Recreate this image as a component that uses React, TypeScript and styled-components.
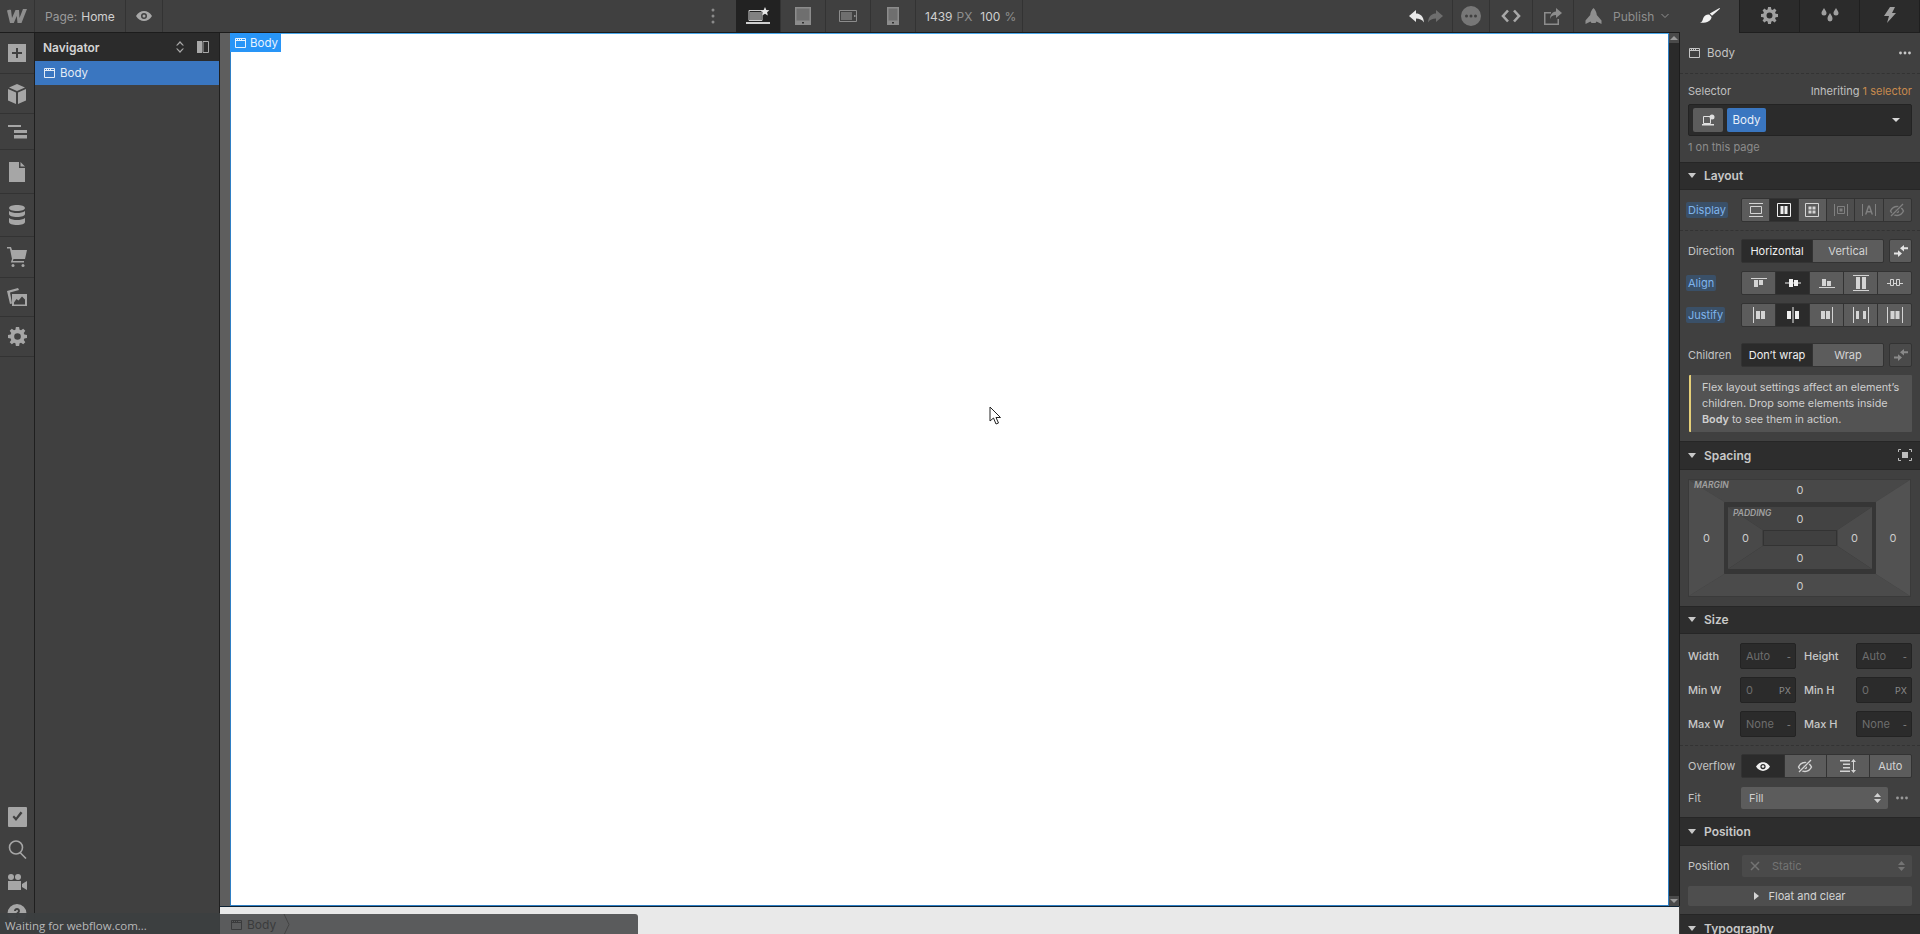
import React from "react";
import styled, { createGlobalStyle } from "styled-components";

const Global = createGlobalStyle`
  html, body { margin: 0; padding: 0; height: 100%; background: #404040; }
  #root { height: 100%; }
  * { box-sizing: border-box; }
`;

const Page = styled.div`
  position: relative;
  display: flex;
  width: 1920px;
  height: 934px;
  overflow: hidden;
  font-family: Inter, "Liberation Sans", sans-serif;
  font-size: 11px;
  color: #d9d9d9;
  background: #404040;
`;
const Workspace = styled.div`
  display: flex;
  flex-direction: column;
  width: 1680px;
  height: 934px;
`;
const TopBar = styled.header`
  display: flex;
  align-items: stretch;
  height: 33px;
  background: #404040;
  border-bottom: 1px solid #1c1c1c;
  flex: none;
`;
const TopCell = styled.div<{ $w: number; $active?: boolean; $noBorder?: boolean; $color?: string }>`
  display: flex;
  align-items: center;
  justify-content: center;
  flex: none;
  width: ${(p) => p.$w}px;
  background: ${(p) => (p.$active ? "#222222" : "transparent")};
  border-right: ${(p) => (p.$noBorder ? "none" : "1px solid #333333")};
  color: ${(p) => p.$color ?? "#a8a8a8"};
`;
const PageLabel = styled.div`
  display: flex;
  align-items: center;
  gap: 4px;
  flex: none;
  width: 91px;
  padding-left: 10px;
  font-size: 12px;
  color: #9a9a9a;
  border-right: 1px solid #333333;
  b { font-weight: 400; color: #d0d0d0; }
`;
const Spring = styled.div<{ $w?: number }>`
  flex: ${(p) => (p.$w ? "none" : "1")};
  width: ${(p) => (p.$w ? `${p.$w}px` : "auto")};
`;
const Readout = styled.div`
  display: flex;
  align-items: center;
  flex: none;
  width: 107px;
  padding-left: 9px;
  font-size: 12px;
  color: #cfcfcf;
  border-right: 1px solid #333333;
  gap: 4px;
  span { color: #8f8f8f; }
  i { font-style: normal; margin-left: 4px; }
`;
const UndoPair = styled.div`
  display: flex;
  gap: 4px;
`;
const PublishCell = styled.div`
  display: flex;
  align-items: center;
  flex: none;
  width: 106px;
  padding-left: 11px;
  font-size: 12px;
  color: #8f8f8f;
  gap: 11px;
  svg:last-child { margin-left: -4px; }
`;
const Body = styled.div`
  display: flex;
  flex: 1;
  min-height: 0;
`;
const Rail = styled.nav`
  display: flex;
  flex-direction: column;
  width: 35px;
  flex: none;
  background: #404040;
  border-right: 1px solid #1f1f1f;
`;
const RailItem = styled.div<{ $h: number; $plain?: boolean; $top?: number }>`
  display: flex;
  align-items: ${(p) => (p.$top ? "flex-start" : "center")};
  justify-content: center;
  height: ${(p) => p.$h}px;
  padding-top: ${(p) => p.$top ?? 0}px;
  flex: none;
  color: #a6a6a6;
  border-bottom: ${(p) => (p.$plain ? "none" : "1px solid #333333")};
`;
const Navigator = styled.aside`
  width: 185px;
  flex: none;
  background: #404040;
  border-right: 1px solid #1f1f1f;
`;
const NavHead = styled.div`
  display: flex;
  align-items: center;
  height: 28px;
  padding: 0 10px 0 8px;
  background: #2b2b2b;
  font-size: 12px;
  font-weight: 600;
  color: #d4d4d4;
`;
const NavTool = styled.span<{ $mr?: number }>`
  display: flex;
  color: #a8a8a8;
  margin-right: ${(p) => p.$mr ?? 0}px;
`;
const NavRow = styled.div`
  display: flex;
  align-items: center;
  gap: 5px;
  height: 24px;
  padding-left: 9px;
  background: #3a76c0;
  font-size: 11.5px;
  color: #e4ecf6;
`;
const CanvasCol = styled.main`
  display: flex;
  flex-direction: column;
  flex: 1;
  min-width: 0;
`;
const CanvasRow = styled.div`
  display: flex;
  height: 873px;
  flex: none;
`;
const Gutter = styled.div`
  width: 10px;
  flex: none;
  background: #5e5e5e;
`;
const Canvas = styled.div`
  position: relative;
  width: 1439px;
  flex: none;
  background: #ffffff;
  border: 1px solid #2f7fc4;
  border-top-color: #4aa8ea;
`;
const BodyTag = styled.div`
  position: absolute;
  left: -1px;
  top: -1px;
  display: flex;
  align-items: center;
  gap: 4px;
  width: 51px;
  height: 19px;
  padding-left: 5px;
  background: #2895f7;
  font-size: 11.5px;
  color: #e8f3fe;
`;
const Cursor = styled.svg`
  position: absolute;
  left: 758px;
  top: 372px;
`;
const Scrollbar = styled.div`
  display: flex;
  flex-direction: column;
  justify-content: space-between;
  width: 11px;
  flex: none;
  background: #2a2a2a;
  border-right: 1px solid #1c1c1c;
`;
const ScrollBtn = styled.div<{ $down?: boolean }>`
  display: flex;
  align-items: center;
  justify-content: center;
  height: 10px;
  background: #4a4a4a;
  &::before {
    content: "";
    border-left: 4px solid transparent;
    border-right: 4px solid transparent;
    ${(p) => (p.$down ? "border-top: 4px solid #9a9a9a;" : "border-bottom: 4px solid #9a9a9a;")}
  }
`;
const Footer = styled.div`
  flex: 1;
  padding-top: 7px;
  background: #e9e9e9;
  border-top: 1px solid #0e2233;
  margin-right: 1px;
`;
const Crumbs = styled.div`
  display: flex;
  align-items: center;
  gap: 5px;
  width: 418px;
  height: 21px;
  padding-left: 11px;
  background: #5a5b5c;
  border-radius: 0 3px 0 0;
  font-size: 12px;
  color: #3a3b3c;
`;
const CrumbChevron = styled.svg`
  display: block;
  flex: none;
  margin-left: 2px;
`;
const Status = styled.div`
  position: absolute;
  left: 0;
  bottom: 0;
  display: flex;
  align-items: center;
  width: 220px;
  height: 21px;
  padding: 3px 0 0 5px;
  background: #3c3f41;
  font-family: "Open Sans", sans-serif;
  font-size: 11.5px;
  color: #bdbdbd;
  opacity: 0.97;
`;

/* Right panel */
const Panel = styled.aside`
  width: 240px;
  height: 934px;
  flex: none;
  overflow: hidden;
  background: #404040;
`;
const Tabs = styled.div`
  display: flex;
  height: 33px;
`;
const Tab = styled.div<{ $w: number; $active?: boolean }>`
  display: flex;
  align-items: center;
  justify-content: center;
  width: ${(p) => p.$w}px;
  flex: none;
  padding-bottom: 2px;
  color: ${(p) => (p.$active ? "#f2f2f2" : "#a0a0a0")};
  background: ${(p) => (p.$active ? "#404040" : "#2b2b2b")};
  border-right: 1px solid #1f1f1f;
  border-bottom: ${(p) => (p.$active ? "none" : "1px solid #1f1f1f")};
`;
const ElementRow = styled.div`
  display: flex;
  align-items: center;
  gap: 7px;
  height: 41px;
  padding: 0 9px;
  font-size: 11.5px;
  color: #c4c4c4;
  border-bottom: 1px dashed #333333;
`;
const Push = styled.div`
  flex: 1;
`;
const RowDots = styled.span<{ $color: string; $ml?: number }>`
  display: flex;
  color: ${(p) => p.$color};
  margin-left: ${(p) => p.$ml ?? 0}px;
`;
const SelectorBlock = styled.div`
  height: 88px;
  padding: 10px 8px 0;
`;
const SelectorLabels = styled.div`
  display: flex;
  justify-content: space-between;
  height: 14px;
  line-height: 14px;
  margin-bottom: 6px;
  font-size: 11px;
  color: #c0c0c0;
  em { font-style: normal; color: #c78a4e; }
`;
const SelectorBox = styled.div`
  display: flex;
  align-items: center;
  gap: 4px;
  height: 32px;
  padding: 0 11px 0 4px;
  background: #2b2b2b;
  border: 1px solid #232323;
  border-radius: 2px;
`;
const ChipIcon = styled.div`
  display: flex;
  align-items: center;
  justify-content: center;
  width: 30px;
  height: 24px;
  background: #5c5c5c;
  border-radius: 2px;
  color: #e0e0e0;
`;
const ChipBlue = styled.div`
  display: flex;
  align-items: center;
  justify-content: center;
  width: 39px;
  height: 24px;
  background: #3a76c0;
  border-radius: 2px;
  font-size: 11.5px;
  color: #e8f0fa;
`;
const Caret = styled.div<{ $color?: string }>`
  flex: none;
  border-left: 4px solid transparent;
  border-right: 4px solid transparent;
  border-top: 4px solid ${(p) => p.$color ?? "#d0d0d0"};
`;
const OnPage = styled.div`
  margin-top: 4px;
  height: 14px;
  line-height: 14px;
  font-size: 11px;
  color: #8c8c8c;
`;
const SectionHead = styled.div<{ $h?: number }>`
  display: flex;
  align-items: center;
  gap: 8px;
  height: ${(p) => p.$h ?? 28}px;
  padding: 0 8px 1px;
  background: #2d2d2d;
  border-top: 1px solid #262626;
  border-bottom: 1px solid #262626;
  font-size: 12px;
  font-weight: 600;
  color: #c8c8c8;
`;
const SectionBody = styled.div<{ $pb?: number; $pt?: number }>`
  padding: ${(p) => p.$pt ?? 9}px 8px ${(p) => p.$pb ?? 9}px;
`;
const Row = styled.div<{ $mb?: number; $h?: number }>`
  display: flex;
  align-items: center;
  height: ${(p) => p.$h ?? 24}px;
  margin-bottom: ${(p) => p.$mb ?? 8}px;
`;
const Label = styled.div<{ $w?: number }>`
  width: ${(p) => p.$w ?? 53}px;
  flex: none;
  font-size: 11px;
  color: #c4c4c4;
`;
const StyledLabel = styled.div`
  flex: none;
  margin-left: -2px;
  margin-right: auto;
  padding: 1px 2px;
  border-radius: 2px;
  background: #3a5068;
  font-size: 11px;
  line-height: 14px;
  color: #7fb4ec;
`;
const Dashed = styled.div`
  margin: 0 -8px 8px;
  border-top: 1px dashed #333333;
`;
const Segments = styled.div<{ $w?: number }>`
  display: flex;
  flex: none;
  width: ${(p) => p.$w ?? 171}px;
  height: 100%;
  border: 1px solid #333333;
  border-radius: 2px;
  overflow: hidden;
  background: #333333;
  gap: 1px;
`;
const Seg = styled.div<{ $on?: boolean; $dim?: boolean }>`
  display: flex;
  flex: 1 1 0;
  align-items: center;
  justify-content: center;
  min-width: 0;
  background: ${(p) => (p.$on ? "#2b2b2b" : p.$dim ? "#4d4d4d" : "#5c5c5c")};
  color: ${(p) => (p.$on ? "#f0f0f0" : p.$dim ? "#808080" : "#d4d4d4")};
  font-size: 11px;
`;
const SmallBtn = styled.div<{ $dim?: boolean }>`
  display: flex;
  align-items: center;
  justify-content: center;
  flex: none;
  width: 23px;
  height: 100%;
  margin-left: 5px;
  border: 1px solid #333333;
  border-radius: 2px;
  background: ${(p) => (p.$dim ? "#4a4a4a" : "#5c5c5c")};
  color: ${(p) => (p.$dim ? "#8a8a8a" : "#e4e4e4")};
`;
const Notice = styled.div`
  height: 57px;
  padding: 5px 3px 0 11px;
  margin-left: 1px;
  background: #535353;
  border-left: 2px solid #e5cf78;
  border-radius: 1px;
  font-size: 10.8px;
  line-height: 16px;
  color: #cfcfcf;
  b { font-weight: 600; }
`;
const SpacingOuter = styled.div`
  position: relative;
  display: grid;
  grid-template-columns: 35px 1fr 34px;
  grid-template-rows: 22px 72px 22px;
  width: 223px;
  height: 118px;
  border: 1px solid #3a3a3a;
  text-align: center;
`;
const SpacingInner = styled.div`
  position: relative;
  display: grid;
  grid-template-columns: 35px 1fr 35px;
  grid-template-rows: 23px 16px 23px;
  height: 62px;
  text-align: center;
`;
const SpacingFrame = styled.div`
  position: relative;
  grid-column: 2;
  grid-row: 2;
  padding: 5px 4px;
  background: #363636;
  border-radius: 1px;
`;
const Bevel = styled.svg`
  position: absolute;
  inset: 0;
  width: 100%;
  height: 100%;
`;
const Val = styled.div<{ $c: number; $r: number; $nudge?: number }>`
  position: relative;
  grid-column: ${(p) => p.$c};
  grid-row: ${(p) => p.$r};
  display: flex;
  align-items: center;
  justify-content: center;
  padding: ${(p) => (p.$nudge && p.$nudge > 0 ? p.$nudge : 0)}px 0 ${(p) => (p.$nudge && p.$nudge < 0 ? -p.$nudge : 0)}px;
  font-size: 11px;
  color: #cccccc;
`;
const Tag = styled.div<{ $top: number }>`
  position: absolute;
  left: 5px;
  top: ${(p) => p.$top}px;
  font-size: 8.5px;
  line-height: 12px;
  font-weight: 600;
  font-style: italic;
  color: #a0a0a0;
`;
const Core = styled.div`
  position: relative;
  grid-column: 2;
  grid-row: 2;
  background: #404040;
  border: 1px solid #333333;
  border-radius: 1px;
`;
const Field = styled.div`
  display: flex;
  align-items: center;
  justify-content: space-between;
  flex: none;
  width: 56px;
  height: 26px;
  padding: 0 4px 0 5px;
  background: #2b2b2b;
  border: 1px solid #232323;
  border-radius: 2px;
  font-size: 11px;
  color: #6e6e6e;
  span { color: #8a8a8a; font-size: 9px; }
`;
const SizeLabel = styled(Label)<{ $gap?: boolean }>`
  font-weight: 500;
  color: #c8c8c8;
  margin-left: ${(p) => (p.$gap ? 8 : 0)}px;
`;
const SelectBox = styled.div<{ $w: number; $dim?: boolean }>`
  display: flex;
  align-items: center;
  justify-content: space-between;
  flex: none;
  width: ${(p) => p.$w}px;
  height: 100%;
  padding: 0 7px 0 8px;
  background: ${(p) => (p.$dim ? "#4a4a4a" : "#5c5c5c")};
  border-radius: 2px;
  font-size: 11px;
  color: ${(p) => (p.$dim ? "#747474" : "#d0d0d0")};
`;
const StaticValue = styled.span`
  display: flex;
  align-items: center;
  gap: 12px;
`;
const FloatBtn = styled.div`
  display: flex;
  align-items: center;
  justify-content: center;
  gap: 9px;
  height: 20px;
  margin-bottom: 8px;
  background: #4e4e4e;
  border-radius: 2px;
  font-size: 11px;
  color: #d4d4d4;
`;
const Glyph = styled.svg`
  display: block;
  flex: none;
`;

const Ico: React.FC<{ w?: number; h?: number; children: React.ReactNode }> = ({ w = 16, h = 16, children }) => (
  <Glyph width={w} height={h} viewBox={`0 0 ${w} ${h}`} fill="currentColor">
    {children}
  </Glyph>
);

const WindowIcon = () => (
  <Ico w={11} h={10}>
    <path d="M.5.5h10v9H.5zM.5 2.5h10" fill="none" stroke="currentColor" />
    <path d="M2 1h1v1H2zM4 1h1v1H4zM6 1h1v1H6z" />
  </Ico>
);
const Tri = () => (
  <Ico w={8} h={5}>
    <path d="M0 0h8L4 5z" />
  </Ico>
);
const SelectArrows = () => (
  <Ico w={7} h={10}>
    <path d="M3.5 0L7 4H0zM0 6h7l-3.5 4z" />
  </Ico>
);
const Dots = ({ w = 12 }: { w?: number }) => (
  <Ico w={w} h={4}>
    <circle cx="1.5" cy="2" r="1.4" />
    <circle cx="6" cy="2" r="1.4" />
    <circle cx="10.5" cy="2" r="1.4" />
  </Ico>
);
const Eye = ({ w = 16, h = 12 }: { w?: number; h?: number }) => (
  <Glyph width={w} height={h} viewBox="0 0 16 12" fill="currentColor">
    <path fillRule="evenodd" d="M0 6c2-3.5 5-5 8-5s6 1.5 8 5c-2 3.5-5 5-8 5s-6-1.5-8-5zm8-3a3 3 0 100 6 3 3 0 000-6z" />
    <circle cx="8" cy="6" r="1.5" />
  </Glyph>
);
const EyeSlash = ({ bg }: { bg: string }) => (
  <Ico w={16} h={14}>
    <path d="M1.5 8C3 5 5.500 3.500 8 3.500S13 5 14.500 8C13 11 10.500 12.500 8 12.500S3 11 1.500 8z" fill="none" stroke="currentColor" strokeWidth="1.4" />
    <circle cx="8" cy="8" r="2.2" />
    <path d="M1 14L15 0" stroke={bg} strokeWidth="3.2" />
    <path d="M2 13L14 1" stroke="currentColor" strokeWidth="1.3" />
  </Ico>
);
const Gear = ({ s = 19 }: { s?: number }) => (
  <Glyph width={s} height={s} viewBox="0 0 20 20" fill="currentColor">
    <path
      fillRule="evenodd"
      d="M8.300 0h3.400l.5 2.800 1.500.6L16 1.800 18.200 4l-1.600 2.300.6 1.500 2.800.5v3.400l-2.800.5-.6 1.500 1.600 2.300L16 18.200l-2.300-1.600-1.500.6-.5 2.800H8.300l-.5-2.800-1.500-.6L4 18.200 1.800 16l1.600-2.300-.6-1.500L0 11.700V8.300l2.800-.5.6-1.500L1.800 4 4 1.800l2.300 1.600 1.500-.6zM10 6.500a3.500 3.500 0 100 7 3.500 3.500 0 000-7z"
    />
  </Glyph>
);
const Bolt = () => (
  <Ico w={12} h={16}>
    <path d="M6 0h5L8 6h4L3 16l2-7H0z" />
  </Ico>
);
const Drops = () => (
  <Ico w={18} h={14}>
    <path d="M3 0c1.500 2.500 2.500 3.500 2.500 5A2.500 2.500 0 01.500 5C.500 3.500 1.500 2.500 3 0zM15 0c1.500 2.500 2.500 3.500 2.500 5a2.500 2.500 0 01-5 0C12.500 3.500 13.500 2.500 15 0zM9 5c1.500 2.500 2.500 3.500 2.500 6a2.500 2.500 0 01-5 0C6.500 8.500 7.500 7.500 9 5z" />
  </Ico>
);
const Brush = () => (
  <Ico w={20} h={16}>
    <path d="M19.500 0l.5.800-8 7-2.200-2.200zM9.200 6.600l2.400 2.400C11 13 7 15.200 0 14.800c2.500-1 2.400-2.200 3.200-4.500C4 8 6.500 6.300 9.200 6.600z" />
  </Ico>
);
const Swap = () => (
  <Ico w={14} h={12}>
    <path d="M14 2.300H10V0L6 3.300l4 3.300V4.300h4zM0 7.500h4V5.300l4 3.300L4 12V9.500H0z" />
  </Ico>
);

const StrokeIco: React.FC<{ w: number; h: number; d: string; sw?: number }> = ({ w, h, d, sw = 1 }) => (
  <Glyph width={w} height={h} viewBox={`0 0 ${w} ${h}`} fill="none" stroke="currentColor" strokeWidth={sw}>
    <path d={d} />
  </Glyph>
);

const displayIcons: React.ReactNode[] = [
  <Ico w={14} h={14} key="0"><path d="M0 .5h14M0 13.500h14" fill="none" stroke="currentColor" /><path d="M1.500 3.500h11v7h-11z" fill="none" stroke="currentColor" /></Ico>,
  <Ico w={14} h={14} key="1"><path d="M.5.5h13v13H.5z" fill="none" stroke="currentColor" /><path d="M3.500 3h3v8h-3zM7.500 3h3v8h-3z" /></Ico>,
  <Ico w={14} h={14} key="2"><path d="M.5.5h13v13H.5z" fill="none" stroke="currentColor" /><path d="M3.500 3.500h3v3h-3zM7.500 3.500h3v3h-3zM3.500 7.500h3v3h-3zM7.500 7.500h3v3h-3z" /></Ico>,
  <Ico w={14} h={12} key="3"><path d="M.5 0v12M13.500 0v12M3.500 2.500h7v7h-7z" fill="none" stroke="currentColor" /><path d="M5.500 4.500h3v3h-3z" /></Ico>,
  <Ico w={14} h={12} key="4"><path d="M.5 0v12M13.500 0v12" fill="none" stroke="currentColor" /><path d="M6 1.500h2l3 9H9.500l-.7-2H5.200l-.7 2H3zM5.700 7h2.600L7 3.200z" /></Ico>,
  <EyeSlash bg="#4d4d4d" key="5" />,
];
const alignIcons: React.ReactNode[] = [
  <Ico w={16} h={10} key="0"><path d="M0 .5h16" fill="none" stroke="currentColor" /><path d="M3 2h4v7H3zM8 2h4v5H8z" /></Ico>,
  <Ico w={16} h={10} key="1"><path d="M0 5h16" fill="none" stroke="currentColor" /><path d="M4 1h4v8H4zM9 2h4v6H9z" /></Ico>,
  <Ico w={16} h={10} key="2"><path d="M0 9.500h16" fill="none" stroke="currentColor" /><path d="M3 1h4v7H3zM8 3h4v5H8z" /></Ico>,
  <Ico w={16} h={16} key="3"><path d="M0 .5h16M0 15.500h16" fill="none" stroke="currentColor" /><path d="M3 2h4v12H3zM9 2h4v12H9z" /></Ico>,
  <Ico w={16} h={8} key="4"><path d="M0 4.500h3M6.500 4.500h3M13 4.500h3M3.500 .5h3v6h-3zM9.500 .5h3v6h-3z" fill="none" stroke="currentColor" /></Ico>,
];
const justifyIcons: React.ReactNode[] = [
  <Ico w={12} h={16} key="0"><path d="M.5 0v16" fill="none" stroke="currentColor" /><path d="M3 4h4v8H3zM8 4h4v8H8z" /></Ico>,
  <Ico w={12} h={16} key="1"><path d="M6 0v16" fill="none" stroke="currentColor" /><path d="M0 4h4v8H0zM8 4h4v8H8z" /></Ico>,
  <Ico w={12} h={16} key="2"><path d="M11.500 0v16" fill="none" stroke="currentColor" /><path d="M0 4h4v8H0zM5 4h4v8H5z" /></Ico>,
  <Ico w={16} h={16} key="3"><path d="M.5 0v16M15.500 0v16" fill="none" stroke="currentColor" /><path d="M3 4h3v8H3zM10 4h3v8h-3z" /></Ico>,
  <Ico w={16} h={16} key="4"><path d="M.5 0v16M15.500 0v16" fill="none" stroke="currentColor" /><path d="M3.500 4h4v8h-4zM8.500 4h4v8h-4z" /></Ico>,
];

const railTop: { h: number; icon: React.ReactNode }[] = [
  { h: 41, icon: <Ico w={18} h={18}><path fillRule="evenodd" d="M0 0h18v18H0zM8 4v4H4v2h4v4h2v-4h4V8h-4V4z" /></Ico> },
  { h: 40, icon: <Ico w={18} h={20}><path d="M9 0l8 3.500L9 7 1 3.500zM0 5l8 3.500V20L0 16.500zM18 5v11.500L10 20V8.500z" /></Ico> },
  { h: 36, icon: <Ico w={19} h={14}><path d="M0 0h13v2H0zM6 5h13v3H6zM6 10h13v3.500H6z" /></Ico> },
  { h: 44, icon: <Ico w={16} h={20}><path d="M0 0h10v6h6v14H0zM11.500 0L16 4.500h-4.500z" /></Ico> },
  { h: 43, icon: <Ico w={16} h={20}><path d="M8 0c4.400 0 8 1.300 8 3s-3.600 3-8 3-8-1.300-8-3 3.600-3 8-3zM0 6c2 1.500 5 2 8 2s6-.5 8-2v3c0 1.700-3.600 3-8 3s-8-1.300-8-3zM0 13c2 1.500 5 2 8 2s6-.5 8-2v4c0 1.700-3.600 3-8 3s-8-1.300-8-3z" /></Ico> },
  { h: 41, icon: <Ico w={20} h={20}><path d="M0 0h4l1 3h15l-2 9H6.500L5.800 14H17v1.500H3.800L5 12 2.900 1.500H0z" /><circle cx="6" cy="18.500" r="1.500" /><circle cx="16" cy="18.500" r="1.500" /></Ico> },
  { h: 39, icon: <Ico w={20} h={18}><path d="M0 3L11 0l1 2-9 2.500 2 11L3 16z" /><path fillRule="evenodd" d="M5 6h15v12H5zM7 14.500v2h11v-5l-3-3-3.500 4-2-1.500z" /></Ico> },
  { h: 40, icon: <Gear /> },
];

const BevelOuter = () => (
  <Bevel viewBox="0 0 100 100" preserveAspectRatio="none" aria-hidden>
    <polygon points="0,0 100,0 84.500,19 16,19" fill="#484848" />
    <polygon points="0,0 16,19 16,81 0,100" fill="#4e4e4e" />
    <polygon points="100,0 84.500,19 84.500,81 100,100" fill="#525252" />
    <polygon points="0,100 16,81 84.500,81 100,100" fill="#4b4b4b" />
  </Bevel>
);
const BevelPadding = () => (
  <Bevel viewBox="0 0 100 100" preserveAspectRatio="none" aria-hidden>
    <polygon points="0,0 100,0 76,37 24,37" fill="#434343" />
    <polygon points="0,0 24,37 24,63 0,100" fill="#494949" />
    <polygon points="100,0 76,37 76,63 100,100" fill="#4c4c4c" />
    <polygon points="0,100 24,63 76,63 100,100" fill="#464646" />
  </Bevel>
);

export default function App() {
  return (
    <Page>
      <Global />
      <Workspace>
        <TopBar>
          <TopCell $w={35} $color="#8e8e8e">
            <Ico w={20} h={14}>
              <path d="M0 1.500c1-.5 3-1 4-.5l1 8 3.500-8H12l.5 8 3.500-9h4L14.500 14h-4l-.7-7-3 7H3z" />
            </Ico>
          </TopCell>
          <PageLabel>
            Page: <b>Home</b>
          </PageLabel>
          <TopCell $w={37}>
            <Eye />
          </TopCell>
          <Spring />
          <TopCell $w={47} $noBorder $color="#8a8a8a">
            <Ico w={4} h={16}>
              <circle cx="2" cy="2" r="1.500" />
              <circle cx="2" cy="8" r="1.500" />
              <circle cx="2" cy="14" r="1.500" />
            </Ico>
          </TopCell>
          <TopCell $w={45} $active $color="#cfcfcf">
            <Ico w={26} h={18}>
              <path d="M4 3.500h13v10H4z" fill="none" stroke="currentColor" />
              <path d="M5 5h11v8H5z" opacity=".55" />
              <path d="M1 15h24v2H1z" />
              <path d="M20 0l1.300 2.900 3.100.3-2.300 2.100.7 3.100-2.800-1.600-2.800 1.600.7-3.100-2.300-2.100 3.100-.3z" fill="#e8e8e8" />
            </Ico>
          </TopCell>
          <TopCell $w={45} $color="#8c8c8c">
            <Ico w={16} h={18}>
              <path d="M0 0h16v18H0z" />
              <path d="M1.500 1.500h13v12h-13z" fill="#6f6f6f" />
              <path d="M7 15h2v1.500H7z" fill="#333" />
            </Ico>
          </TopCell>
          <TopCell $w={45} $color="#8c8c8c">
            <Ico w={18} h={12}>
              <path d="M.5.5h17v11H.500z" fill="none" stroke="currentColor" />
              <path d="M2 2h11v8H2z" fill="#6f6f6f" />
              <path d="M15 5h1.500v2H15z" />
            </Ico>
          </TopCell>
          <TopCell $w={45} $color="#8c8c8c">
            <Ico w={12} h={18}>
              <path d="M0 0h12v18H0z" />
              <path d="M1.500 1.500h9v12h-9z" fill="#6f6f6f" />
              <path d="M5 15h2v1.500H5z" fill="#333" />
            </Ico>
          </TopCell>
          <Readout>
            1439 <span>PX</span>
            <i>100</i> <span>%</span>
          </Readout>
          <Spring $w={377} />
          <TopCell $w={53}>
            <UndoPair>
              <Ico w={15} h={13}>
                <path d="M7 0v3.500c4 0 7.500 2.500 8 9-2-3-4.500-4-8-4V12L0 6z" fill="#e8e8e8" />
              </Ico>
              <Ico w={15} h={13}>
                <path d="M8 0v3.500c-4 0-7.500 2.500-8 9 2-3 4.500-4 8-4V12l7-6z" fill="#6e6e6e" />
              </Ico>
            </UndoPair>
          </TopCell>
          <TopCell $w={37} $color="#777777">
            <Ico w={20} h={20}>
              <path fillRule="evenodd" d="M10 0a10 10 0 110 20 10 10 0 010-20zM5.500 8.500a1.500 1.500 0 100 3 1.500 1.500 0 000-3zm4.500 0a1.500 1.500 0 100 3 1.500 1.500 0 000-3zm4.500 0a1.500 1.500 0 100 3 1.500 1.500 0 000-3z" />
            </Ico>
          </TopCell>
          <TopCell $w={43}>
            <StrokeIco w={20} h={14} d="M7 1.500L2 7l5 5.500M13 1.500L18 7l-5 5.500" sw={2.6} />
          </TopCell>
          <TopCell $w={41} $color="#8c8c8c">
            <Ico w={20} h={17}>
              <path d="M1 4h7v1.500H2.500v10h12V11H16v6H1z" />
              <path d="M13 0l6 5-6 5V7c-3 0-5 1-6 4 0-4 2-7 6-7.500z" />
            </Ico>
          </TopCell>
          <PublishCell>
            <Ico w={17} h={17}>
              <path d="M8.500 0c2 2 3 4 3.300 7l4.700 5.500V16l-5-2.500-1 1.500h-4l-1-1.500-5 2.500v-3.500L5.200 7c.3-3 1.300-5 3.300-7z" />
            </Ico>
            Publish
            <StrokeIco w={8} h={6} d="M.5 1l3.500 3.500L7.500 1" />
          </PublishCell>
        </TopBar>
        <Body>
          <Rail>
            {railTop.map((r, i) => (
              <RailItem key={i} $h={r.h}>
                {r.icon}
              </RailItem>
            ))}
            <Spring />
            <RailItem $h={33} $plain>
              <Ico w={19} h={20}>
                <path fillRule="evenodd" d="M1 0h17a1 1 0 011 1v18a1 1 0 01-1 1H1a1 1 0 01-1-1V1a1 1 0 011-1zm3.500 10l3.500 4 6.500-8-2-1.500L8 10.500 6 8.500z" />
              </Ico>
            </RailItem>
            <RailItem $h={33} $plain>
              <StrokeIco w={19} h={19} d="M8 1a6.500 6.500 0 110 13 6.500 6.500 0 010-13zM12.500 13l5.500 5.500" sw={1.6} />
            </RailItem>
            <RailItem $h={32} $plain>
              <Ico w={20} h={16}>
                <circle cx="4" cy="3" r="3" />
                <circle cx="11" cy="3" r="3" />
                <path d="M1 7h13v9H1zM15 10l5-3v9l-5-3z" />
              </Ico>
            </RailItem>
            <RailItem $h={36} $plain $top={6}>
              <Ico w={20} h={19}>
                <path fillRule="evenodd" d="M10 0a9.500 9.500 0 110 19 9.500 9.500 0 010-19zM7 7c0-2 1.500-3 3-3s3 1 3 3c0 2-2 2-2 4H9c0-3 2-3 2-4 0-.5-.5-1-1-1s-1 .5-1 1zm2 5h2v2H9z" />
              </Ico>
            </RailItem>
          </Rail>
          <Navigator>
            <NavHead>
              Navigator
              <Push />
              <NavTool $mr={13}>
                <Ico w={8} h={12}>
                  <path d="M4 0l4 4.500H6.500L4 2 1.500 4.500H0zM0 7.500h1.500L4 10l2.500-2.500H8L4 12z" />
                </Ico>
              </NavTool>
              <NavTool>
                <Ico w={12} h={12}>
                  <path d="M0 0h5v12H0z" />
                  <path d="M6 .5h5.500v11H6z" fill="none" stroke="currentColor" />
                </Ico>
              </NavTool>
            </NavHead>
            <NavRow>
              <WindowIcon />
              Body
            </NavRow>
          </Navigator>
          <CanvasCol>
            <CanvasRow>
              <Gutter />
              <Canvas>
                <BodyTag>
                  <WindowIcon />
                  Body
                </BodyTag>
                <Cursor width="13" height="20" viewBox="0 0 13 20">
                  <path d="M1 1v14l3.500-3 2.500 6 2.500-1-2.500-5.500h4.500z" fill="#fff" stroke="#222" strokeWidth="1" />
                </Cursor>
              </Canvas>
              <Scrollbar>
                <ScrollBtn />
                <ScrollBtn $down />
              </Scrollbar>
            </CanvasRow>
            <Footer>
              <Crumbs>
                <WindowIcon />
                Body
                <CrumbChevron width="8" height="21" viewBox="0 0 8 21" fill="none" stroke="#444">
                  <path d="M1 0l5 10.500L1 21" />
                </CrumbChevron>
              </Crumbs>
            </Footer>
          </CanvasCol>
        </Body>
      </Workspace>

      <Panel>
        <Tabs>
          <Tab $w={60} $active><Brush /></Tab>
          <Tab $w={60}><Gear s={17} /></Tab>
          <Tab $w={60}><Drops /></Tab>
          <Tab $w={60}><Bolt /></Tab>
        </Tabs>
        <ElementRow>
          <WindowIcon />
          Body
          <Push />
          <RowDots $color="#c8c8c8"><Dots /></RowDots>
        </ElementRow>
        <SelectorBlock>
          <SelectorLabels>
            <span>Selector</span>
            <span>Inheriting <em>1 selector</em></span>
          </SelectorLabels>
          <SelectorBox>
            <ChipIcon>
              <Ico w={13} h={12}>
                <path d="M1.500 2.500h7v7h-7z" fill="none" stroke="currentColor" />
                <path d="M0 10h12v1.500H0z" />
                <circle cx="10" cy="3" r="2.500" />
              </Ico>
            </ChipIcon>
            <ChipBlue>Body</ChipBlue>
            <Push />
            <Caret $color="#d8d8d8" />
          </SelectorBox>
          <OnPage>1 on this page</OnPage>
        </SelectorBlock>

        <SectionHead>
          <Tri />
          Layout
        </SectionHead>
        <SectionBody $pt={8} $pb={9}>
          <Row $h={24}>
            <StyledLabel>Display</StyledLabel>
            <Segments>
              {displayIcons.map((ic, i) => (
                <Seg key={i} $on={i === 1} $dim={i > 2}>{ic}</Seg>
              ))}
            </Segments>
          </Row>
          <Dashed />
          <Row $h={24}>
            <Label>Direction</Label>
            <Segments $w={143}>
              <Seg $on>Horizontal</Seg>
              <Seg>Vertical</Seg>
            </Segments>
            <SmallBtn><Swap /></SmallBtn>
          </Row>
          <Row $h={24}>
            <StyledLabel>Align</StyledLabel>
            <Segments>
              {alignIcons.map((ic, i) => (
                <Seg key={i} $on={i === 1}>{ic}</Seg>
              ))}
            </Segments>
          </Row>
          <Row $h={24} $mb={16}>
            <StyledLabel>Justify</StyledLabel>
            <Segments>
              {justifyIcons.map((ic, i) => (
                <Seg key={i} $on={i === 1}>{ic}</Seg>
              ))}
            </Segments>
          </Row>
          <Row $h={24}>
            <Label>Children</Label>
            <Segments $w={143}>
              <Seg $on>Don’t wrap</Seg>
              <Seg>Wrap</Seg>
            </Segments>
            <SmallBtn $dim><Swap /></SmallBtn>
          </Row>
          <Notice>
            Flex layout settings affect an element’s children. Drop some elements inside <b>Body</b> to see them in action.
          </Notice>
        </SectionBody>

        <SectionHead $h={29}>
          <Tri />
          Spacing
          <Push />
          <RowDots $color="#bdbdbd">
            <Ico w={14} h={12}>
              <path d="M.5 3V.5H3M11 .5h2.500V3M13.500 9v2.500H11M3 11.500H.5V9" fill="none" stroke="currentColor" />
              <path d="M4 3h6v6H4z" />
            </Ico>
          </RowDots>
        </SectionHead>
        <SectionBody $pb={9}>
          <SpacingOuter>
            <BevelOuter />
            <Tag $top={-1}>MARGIN</Tag>
            <Val $c={2} $r={1} $nudge={-2}>0</Val>
            <Val $c={1} $r={2}>0</Val>
            <SpacingFrame>
              <SpacingInner>
                <BevelPadding />
                <Tag $top={0}>PADDING</Tag>
                <Val $c={2} $r={1}>0</Val>
                <Val $c={1} $r={2}>0</Val>
                <Core />
                <Val $c={3} $r={2}>0</Val>
                <Val $c={2} $r={3}>0</Val>
              </SpacingInner>
            </SpacingFrame>
            <Val $c={3} $r={2}>0</Val>
            <Val $c={2} $r={3} $nudge={2}>0</Val>
          </SpacingOuter>
        </SectionBody>

        <SectionHead>
          <Tri />
          Size
        </SectionHead>
        <SectionBody $pb={8}>
          <Row $h={26}>
            <SizeLabel $w={52}>Width</SizeLabel>
            <Field>Auto<span>-</span></Field>
            <SizeLabel $w={52} $gap>Height</SizeLabel>
            <Field>Auto<span>-</span></Field>
          </Row>
          <Row $h={26}>
            <SizeLabel $w={52}>Min W</SizeLabel>
            <Field>0<span>PX</span></Field>
            <SizeLabel $w={52} $gap>Min H</SizeLabel>
            <Field>0<span>PX</span></Field>
          </Row>
          <Row $h={26}>
            <SizeLabel $w={52}>Max W</SizeLabel>
            <Field>None<span>-</span></Field>
            <SizeLabel $w={52} $gap>Max H</SizeLabel>
            <Field>None<span>-</span></Field>
          </Row>
          <Dashed />
          <Row $h={24} $mb={9}>
            <Label>Overflow</Label>
            <Segments>
              <Seg $on><Eye w={14} h={11} /></Seg>
              <Seg><EyeSlash bg="#5c5c5c" /></Seg>
              <Seg>
                <Ico w={16} h={14}>
                  <path d="M0 1h10v1.500H0zM3 4.500h7V6H3zM3 8h7v1.500H3zM0 11.500h10V13H0z" />
                  <path d="M13.500 0l2.500 3h-2v8h2l-2.500 3-2.500-3h2V3h-2z" />
                </Ico>
              </Seg>
              <Seg>Auto</Seg>
            </Segments>
          </Row>
          <Row $h={22} $mb={0}>
            <Label>Fit</Label>
            <SelectBox $w={147}>Fill<SelectArrows /></SelectBox>
            <RowDots $color="#999999" $ml={8}><Dots /></RowDots>
          </Row>
        </SectionBody>

        <SectionHead $h={29}>
          <Tri />
          Position
        </SectionHead>
        <SectionBody $pb={0}>
          <Row $h={22} $mb={9}>
            <Label $w={54}>Position</Label>
            <SelectBox $w={170} $dim>
              <StaticValue>
                <Ico w={10} h={10}>
                  <path d="M1 1l8 8M9 1l-8 8" fill="none" stroke="currentColor" strokeWidth="1.500" />
                </Ico>
                Static
              </StaticValue>
              <SelectArrows />
            </SelectBox>
          </Row>
          <FloatBtn>
            <Ico w={5} h={8}><path d="M0 0l5 4-5 4z" /></Ico>
            Float and clear
          </FloatBtn>
        </SectionBody>

        <SectionHead $h={29}>
          <Tri />
          Typography
        </SectionHead>
      </Panel>
      <Status>Waiting for webflow.com...</Status>
    </Page>
  );
}
